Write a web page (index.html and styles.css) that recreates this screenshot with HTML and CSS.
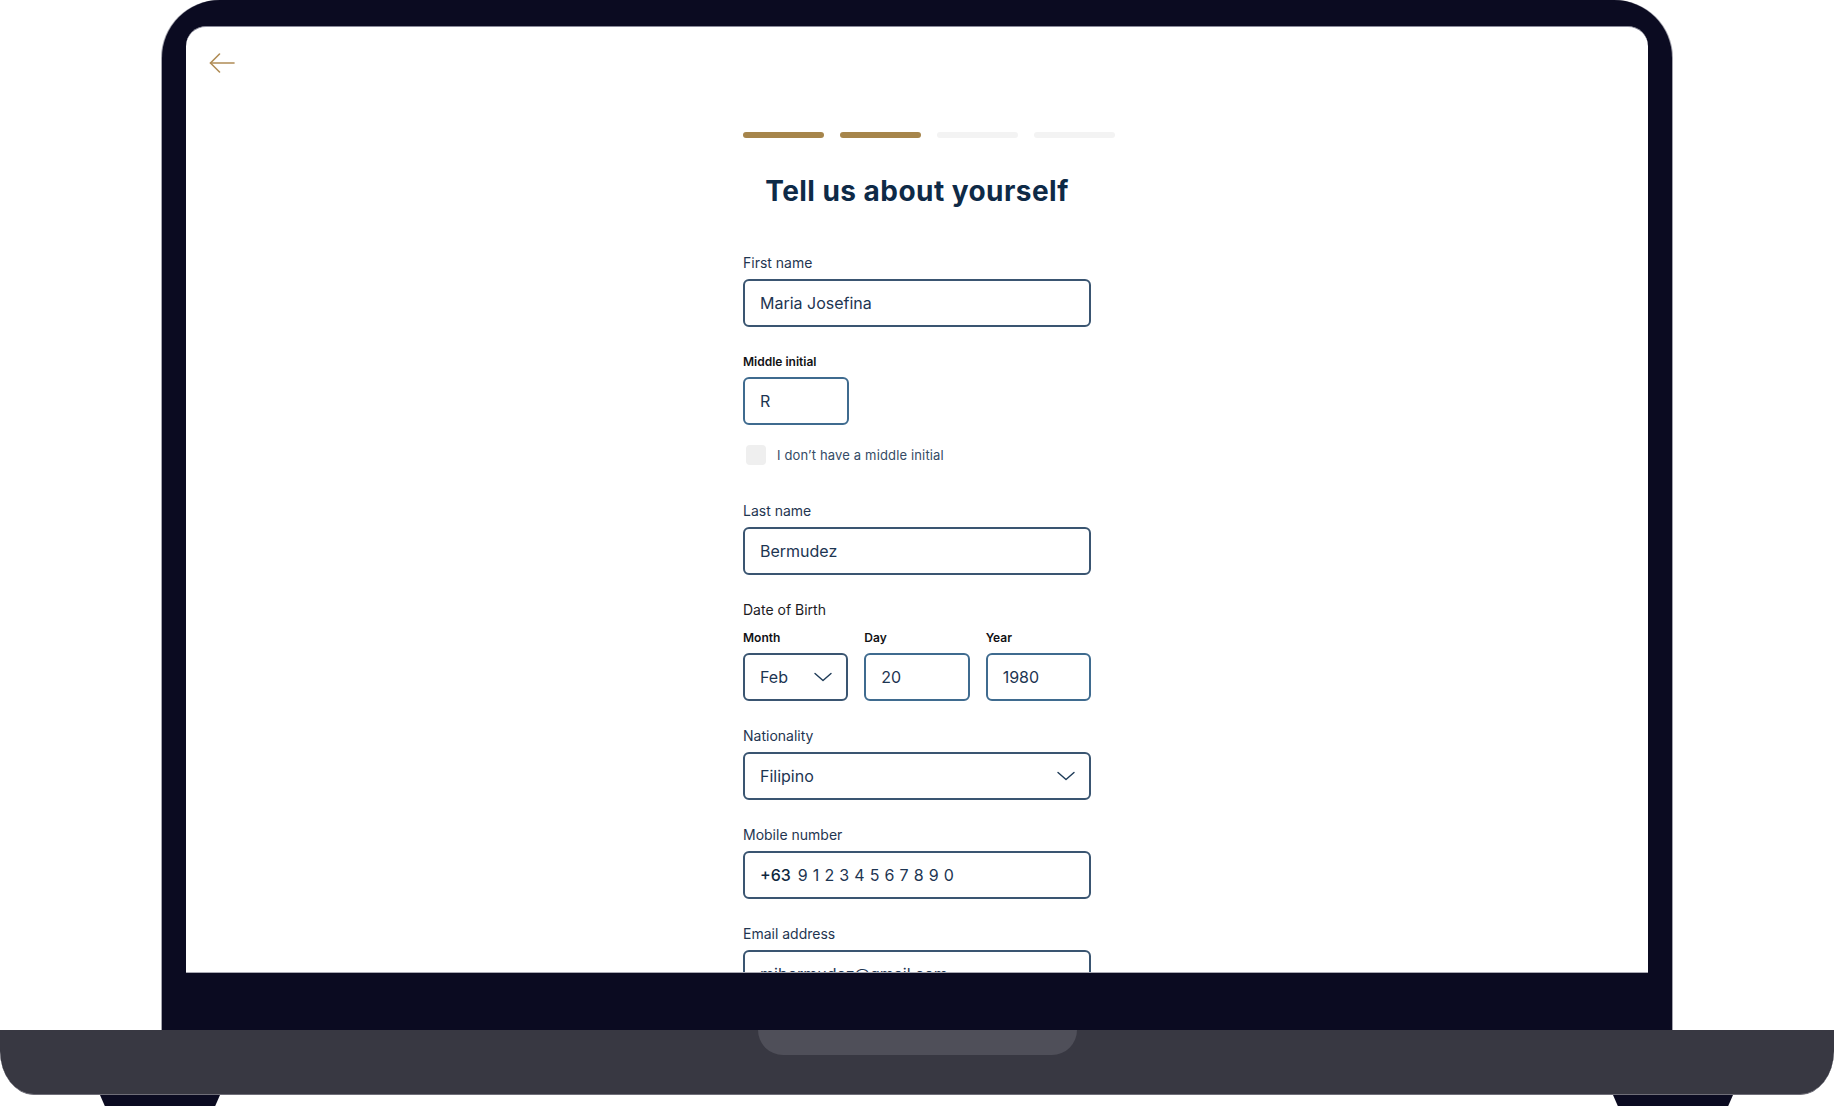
FILE: index.html
```html
<!DOCTYPE html>
<html lang="en">
<head>
<meta charset="utf-8">
<title>Tell us about yourself</title>
<link rel="stylesheet" href="styles.css">
</head>
<body>
<div class="laptop">
  <div class="lid">
    <div class="screen">
      <div class="camera"></div>
      <button class="back" aria-label="Back">
        <svg width="26" height="20" viewBox="0 0 26 20" fill="none" stroke="#b08c55" stroke-width="1.6" stroke-linecap="round" stroke-linejoin="round"><path d="M1.5 10H25"/><path d="M10.5 1L1.5 10L10.5 19"/></svg>
      </button>
      <form class="form">
        <div class="progress">
          <span class="seg done"></span>
          <span class="seg done"></span>
          <span class="seg"></span>
          <span class="seg"></span>
        </div>
        <h1 class="title">Tell us about yourself</h1>

        <div class="field">
          <label class="label">First name</label>
          <div class="input">Maria Josefina</div>
        </div>

        <div class="field field-middle">
          <label class="label small">Middle initial</label>
          <div class="input short blue">R</div>
        </div>

        <div class="check-row">
          <span class="checkbox"></span>
          <span class="check-label">I don’t have a middle initial</span>
        </div>

        <div class="field">
          <label class="label">Last name</label>
          <div class="input">Bermudez</div>
        </div>

        <div class="field">
          <label class="label dark">Date of Birth</label>
          <div class="dob">
            <div class="field">
              <label class="label small">Month</label>
              <div class="input select">Feb
                <svg class="chev" width="18" height="10" viewBox="0 0 18 10" fill="none" stroke="#1d3a57" stroke-width="1.4" stroke-linecap="round" stroke-linejoin="round"><path d="M1 1.5L9 8.5L17 1.5"/></svg>
              </div>
            </div>
            <div class="field">
              <label class="label small">Day</label>
              <div class="input blue">20</div>
            </div>
            <div class="field">
              <label class="label small">Year</label>
              <div class="input blue">1980</div>
            </div>
          </div>
        </div>

        <div class="field">
          <label class="label">Nationality</label>
          <div class="input select">Filipino
            <svg class="chev" width="18" height="10" viewBox="0 0 18 10" fill="none" stroke="#1d3a57" stroke-width="1.4" stroke-linecap="round" stroke-linejoin="round"><path d="M1 1.5L9 8.5L17 1.5"/></svg>
          </div>
        </div>

        <div class="field">
          <label class="label">Mobile number</label>
          <div class="input"><span class="cc">+63</span><span class="num">9 1 2 3 4 5 6 7 8 9 0</span></div>
        </div>

        <div class="field">
          <label class="label">Email address</label>
          <div class="input">mjbermudez@gmail.com</div>
        </div>
      </form>
    </div>
  </div>
  <div class="base">
    <div class="notch"></div>
  </div>
  <div class="feet">
    <span class="foot"></span>
    <span class="foot"></span>
  </div>
</div>
</body>
</html>
```

FILE: styles.css
```css
* { box-sizing: border-box; }

html, body {
  margin: 0;
  padding: 0;
  background: #ffffff;
  overflow: hidden;
}

body {
  width: 1834px;
  height: 1106px;
  font-family: "Inter", "Noto Sans", sans-serif;
}

.laptop {
  display: flex;
  flex-direction: column;
  width: 1834px;
  height: 1106px;
}

.lid {
  margin: 0 162px;
  height: 1030px;
  background: #0b0b21;
  border-radius: 58px 58px 0 0;
  padding: 26px 24px 57px;
  box-shadow: -1px 0 0 #a3a3ad, 1px 0 0 #a3a3ad;
}

.screen {
  position: relative;
  height: 947px;
  background: #ffffff;
  border-radius: 20px 20px 0 0;
  border-top: 1px solid #8a8a99;
  border-bottom: 1px solid #a9a9b3;
  overflow: hidden;
  padding-top: 26px;
}

.camera {
  position: absolute;
  top: -1px;
  left: 631px;
  width: 187px;
  height: 1px;
  background: #ffffff;
}

.back {
  display: block;
  margin: 0 0 0 23px;
  padding: 0;
  border: 0;
  background: none;
  width: 26px;
  height: 20px;
}
.back svg { display: block; }

.form {
  width: 348px;
  margin: 59px auto 0;
  display: flex;
  flex-direction: column;
  gap: 25px;
}

.progress {
  align-self: flex-start;
  width: 372px;
  display: flex;
  gap: 16px;
  height: 6px;
}
.seg {
  flex: 1;
  height: 6px;
  border-radius: 3px;
  background: #f3f3f3;
}
.seg.done { background: #a6854b; }

.title {
  margin: 10px 0 19px;
  text-align: center;
  white-space: nowrap;
  font-family: "Inter", "Noto Sans", sans-serif;
  font-weight: 700;
  font-size: 28px;
  line-height: 36px;
  letter-spacing: 0.45px;
  color: #0e2a47;
}

.field {
  display: flex;
  flex-direction: column;
  gap: 6px;
}

.field-middle { margin-top: 2px; gap: 7px; }

.label {
  font-size: 14px;
  line-height: 20px;
  color: #1f3651;
  font-weight: 400;
}
.label.dark { color: #1c1c1f; }
.label.small {
  font-size: 12px;
  line-height: 16px;
  font-weight: 600;
  color: #111114;
}

.input {
  height: 48px;
  border: 2px solid #3a5571;
  border-radius: 6px;
  padding: 0 15px;
  display: flex;
  align-items: center;
  font-size: 16px;
  color: #1d3552;
  white-space: nowrap;
}
.input.blue { border-color: #3f6b8f; }
.input.short { width: 106px; }
.input.select { justify-content: space-between; padding-right: 14px; }
.chev { display: block; flex: none; }

.check-row {
  display: flex;
  align-items: center;
  gap: 11px;
  margin: -5px 0 11px;
  padding-left: 3px;
  height: 20px;
}
.checkbox {
  width: 20px;
  height: 20px;
  border-radius: 4px;
  background: #efefef;
}
.check-label {
  font-size: 13px;
  line-height: 20px;
  letter-spacing: 0.15px;
  color: #354c66;
}

.dob {
  margin-top: 4px;
  display: grid;
  grid-template-columns: repeat(3, 1fr);
  gap: 16px;
}
.dob .field { gap: 7px; }

.cc {
  font-weight: 500;
  color: #0f2740;
  margin-right: 7px;
}
.num {
  letter-spacing: 0.3px;
}

.base {
  position: relative;
  height: 65px;
  background: #383842;
  border-radius: 0 0 34px 34px / 0 0 44px 44px;
  border-bottom: 1px solid #6f6e78;
}

.notch {
  width: 319px;
  height: 25px;
  margin: 0 auto;
  background: #4f4f59;
  border-radius: 0 0 26px 26px;
}

.feet {
  height: 11px;
  display: flex;
  justify-content: space-between;
  padding: 0 101px 0 100px;
}
.foot {
  width: 120px;
  height: 11px;
  background: #0b0b21;
  clip-path: polygon(0 0, 100% 0, 96% 100%, 4% 100%);
}
```
